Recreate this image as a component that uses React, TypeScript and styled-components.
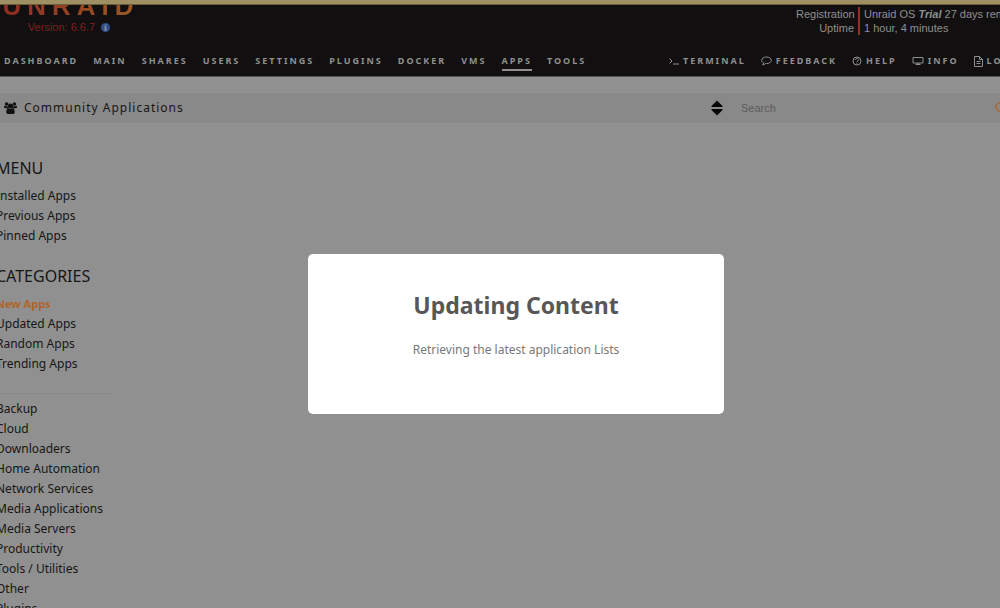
import React from "react";
import styled, { createGlobalStyle } from "styled-components";

const GlobalStyle = createGlobalStyle`
  * { box-sizing: border-box; }
  body {
    margin: 0;
    min-height: 100vh;
    overflow: hidden;
    background: #909090;
    color: #161616;
    font-family: "Noto Sans", "Open Sans", sans-serif;
    font-size: 12px;
    line-height: 20px;
  }
`;

const Page = styled.div`
  height: 100vh;
  overflow: hidden;
`;

const Notice = styled.div`
  height: 5px;
  background: #9f9064;
  border-bottom: 1px solid #6a5f3c;
`;

const Header = styled.header`
  height: 72px;
  display: flex;
  flex-direction: column;
  justify-content: space-between;
  overflow: hidden;
  background: #110f10;
  color: #8f8f8f;
  border-bottom: 1px solid #555;
  white-space: nowrap;
`;

const HeaderTop = styled.div`
  display: flex;
  height: 30px;
  justify-content: space-between;
  align-items: flex-end;
`;

const Brand = styled.div`
  width: 138px;
  display: flex;
  flex-direction: column;
  align-items: center;
`;

const Logo = styled.a`
  font: 700 26px/26px "Liberation Sans", sans-serif;
  letter-spacing: 6px;
  padding-left: 4px;
  color: transparent;
  text-decoration: none;
  background: linear-gradient(90deg, #8e2a22, #9a5a22);
  background-clip: text;
`;

const Version = styled.div`
  display: flex;
  align-items: center;
  gap: 6px;
  height: 16px;
  font: 11px/16px "Liberation Sans", sans-serif;
  color: #80211f;
`;

const ServerInfo = styled.dl`
  width: 204px;
  margin: 0;
  display: grid;
  grid-template-columns: 62px 1fr;
  font: 11px/14px "Liberation Sans", sans-serif;
`;

const InfoLabel = styled.dt`
  text-align: right;
  padding-right: 4px;
`;

const InfoValue = styled.dd`
  margin: 0;
  padding-left: 4px;
  border-left: 2px solid #8f3528;
`;

const Nav = styled.nav`
  display: flex;
  justify-content: space-between;
  height: 25px;
`;

const NavGroup = styled.div<{ $gap: number }>`
  display: flex;
  gap: ${(p) => p.$gap}px;
  padding-left: 4px;
`;

const Utilities = styled(NavGroup)`
  width: 331px;
  padding: 0;
`;

const NavLink = styled.a<{ $active?: boolean }>`
  display: flex;
  align-items: center;
  gap: 4px;
  height: 20px;
  padding-top: 2px;
  color: inherit;
  text-decoration: none;
  font: 700 9px/16px "Noto Sans", sans-serif;
  letter-spacing: 2px;
  border-bottom: 2px solid ${(p) => (p.$active ? "#8f8f8f" : "transparent")};
`;

const TitleBar = styled.div`
  display: flex;
  align-items: center;
  height: 30px;
  margin-top: 16px;
  padding-left: 4px;
  background: #898989;
  overflow: hidden;
`;

const Title = styled.h1`
  flex: 1;
  display: flex;
  align-items: center;
  gap: 7px;
  margin: 0;
  font-size: 12px;
  font-weight: 400;
  letter-spacing: 1px;
`;

const Tools = styled.div`
  display: flex;
  align-items: center;
  width: 289px;
`;

const IconButton = styled.button`
  display: flex;
  padding: 0;
  border: 0;
  background: none;
  color: #050505;
`;

const SearchInput = styled.input`
  flex: 1;
  min-width: 0;
  margin: 0 0 0 18px;
  padding: 0;
  border: 0;
  background: none;
  font: 11px/16px "Liberation Sans", sans-serif;
  &::placeholder { color: #5c5c5c; opacity: 1; }
`;

const SearchButton = styled(IconButton)`
  width: 5px;
  overflow: hidden;
  color: #b0652a;
  svg { flex-shrink: 0; }
`;

const Sidebar = styled.aside`
  width: 114px;
  margin: 35px 0 0 -4px;
`;

const Heading = styled.h2`
  margin: 0 0 8px;
  font-size: 16px;
  line-height: 20px;
  font-weight: 400;
  text-transform: uppercase;
`;

const List = styled.ul`
  margin: 0;
  padding: 0;
  list-style: none;
  & + h2 { margin-top: 20px; }
`;

const Item = styled.li`
  display: flex;
  white-space: nowrap;
`;

const ItemLink = styled.a<{ $selected?: boolean }>`
  color: ${(p) => (p.$selected ? "#b0652a" : "inherit")};
  font-size: ${(p) => (p.$selected ? 11 : 12)}px;
  font-weight: ${(p) => (p.$selected ? 700 : 400)};
  text-decoration: none;
`;

const Divider = styled.hr`
  margin: 19px 0 5px;
  border: 0;
  border-top: 1px solid #888;
`;

const Overlay = styled.div`
  position: fixed;
  inset: 0;
  display: flex;
  align-items: center;
  justify-content: center;
  padding: 60px 0 0 32px;
`;

const Dialog = styled.div`
  width: 416px;
  min-height: 160px;
  padding: 32px 16px;
  border-radius: 5px;
  background: #fff;
  text-align: center;
`;

const DialogTitle = styled.h2`
  margin: 0;
  font: 700 23px/38px "Noto Sans", sans-serif;
  color: #575757;
`;

const DialogText = styled.p`
  margin: 16px 0 0;
  font-size: 12px;
  line-height: 20px;
  color: #797979;
`;

const line = { fill: "none", stroke: "currentColor", strokeWidth: 1 } as const;

const InfoIcon = () => (
  <svg width="9" height="9" viewBox="0 0 9 9" aria-hidden="true">
    <circle cx="4.5" cy="4.5" r="4.5" fill="#314f8d" />
    <path d="M3.8 1.4h1.5v1.3H3.8zM3.2 3.6h2.1v2.9h.6v.9H3.2v-.9h.6v-2h-.6z" fill="#8a94a4" />
  </svg>
);
const TerminalIcon = () => (
  <svg width="10" height="10" viewBox="0 0 10 10" aria-hidden="true" {...line}>
    <path d="M.5 2.5 3 5 .5 7.5M4 8h6" />
  </svg>
);
const FeedbackIcon = () => (
  <svg width="11" height="10" viewBox="0 0 11 10" aria-hidden="true" {...line}>
    <path d="M5.5 1C2.8 1 .7 2.4.7 4.3c0 1.1.8 2 1.9 2.6-.1.8-.5 1.5-1 2 1.3-.1 2.2-.6 2.900-1.400.3.1.7.1 1 .1 2.700 0 4.800-1.400 4.800-3.300S8.200 1 5.500 1Z" />
  </svg>
);
const HelpIcon = () => (
  <svg width="10" height="10" viewBox="0 0 10 10" aria-hidden="true" {...line}>
    <circle cx="5" cy="5" r="4" />
    <path d="M3.5 4c0-2 3-1.9 3-.2C6.5 4.9 5 4.7 5 6M5 6.700v1" />
  </svg>
);
const MonitorIcon = () => (
  <svg width="12" height="10" viewBox="0 0 12 10" aria-hidden="true" {...line}>
    <path d="M1 1.5h10v5.5H1zM5 7v1.500M7 7v1.500M3.500 8.500h5" />
  </svg>
);
const LogIcon = () => (
  <svg width="9" height="11" viewBox="0 0 9 11" aria-hidden="true" {...line}>
    <path d="M.5.5h5l3 3v7h-8zM5.5.5v3h3M2.500 5.500h4M2.500 7.500h4" />
  </svg>
);
const UsersIcon = () => (
  <svg width="13" height="12" viewBox="0 0 13 12" fill="#111" aria-hidden="true">
    <circle cx="2.6" cy="2" r="1.8" />
    <circle cx="10.4" cy="2" r="1.8" />
    <circle cx="6.5" cy="4" r="2.6" />
    <path d="M1 3.8c1 .7 1.8.6 2.6.1 0 1 .3 1.7.8 2.3H1.300C.5 6.200 0 5.800 0 5c0-.6.3-1.500 1-1.200ZM12 3.800c-1 .7-1.800.6-2.600.1 0 1-.3 1.700-.8 2.300h3.100c.8 0 1.300-.4 1.300-1.200 0-.6-.3-1.500-1-1.200ZM4.300 6.200c1.400 1 3 1 4.400 0 1.500 0 2 2 2 3.700 0 1.300-.8 2.100-2 2.100H4.300c-1.200 0-2-.8-2-2.100 0-1.700.5-3.700 2-3.700Z" />
  </svg>
);
const SortIcon = () => (
  <svg width="12" height="16" viewBox="0 0 12 16" fill="currentColor" aria-hidden="true">
    <path d="M6 .5 11.5 6q.5 1-.5 1H1Q0 7 .5 6ZM6 15.5.5 10Q0 9 1 9h10q1 0 .5 1Z" />
  </svg>
);
const SearchIcon = () => (
  <svg width="12" height="12" viewBox="0 0 12 12" aria-hidden="true" fill="none" stroke="currentColor" strokeWidth="1.5">
    <circle cx="5" cy="5" r="4" /><path d="m8 8 3 3" />
  </svg>
);

const tabs = ["DASHBOARD", "MAIN", "SHARES", "USERS", "SETTINGS", "PLUGINS", "DOCKER", "VMS", "APPS", "TOOLS"];
const utilities = [
  { label: "TERMINAL", Icon: TerminalIcon },
  { label: "FEEDBACK", Icon: FeedbackIcon },
  { label: "HELP", Icon: HelpIcon },
  { label: "INFO", Icon: MonitorIcon },
  { label: "LOG", Icon: LogIcon },
];
const menu = ["Installed Apps", "Previous Apps", "Pinned Apps"];
const featured = ["New Apps", "Updated Apps", "Random Apps", "Trending Apps"];
const categories = ["Backup", "Cloud", "Downloaders", "Home Automation", "Network Services", "Media Applications", "Media Servers", "Productivity", "Tools / Utilities", "Other", "Plugins"];

const LinkList = ({ items, selected }: { items: string[]; selected?: string }) => (
  <List>
    {items.map((item) => (
      <Item key={item}>
        <ItemLink href="#" $selected={item === selected}>{item}</ItemLink>
      </Item>
    ))}
  </List>
);

export default function App() {
  return (
    <Page>
      <GlobalStyle />
      <Notice />
      <Header>
        <HeaderTop>
          <Brand>
            <Logo href="#">UNRAID</Logo>
            <Version>Version: 6.6.7 <InfoIcon /></Version>
          </Brand>
          <ServerInfo>
            <InfoLabel>Registration</InfoLabel>
            <InfoValue>Unraid OS <b><i>Trial</i></b> 27 days remaining</InfoValue>
            <InfoLabel>Uptime</InfoLabel>
            <InfoValue>1 hour, 4 minutes</InfoValue>
          </ServerInfo>
        </HeaderTop>
        <Nav>
          <NavGroup $gap={15}>
            {tabs.map((tab) => (
              <NavLink key={tab} href="#" $active={tab === "APPS"}>{tab}</NavLink>
            ))}
          </NavGroup>
          <Utilities $gap={15}>
            {utilities.map(({ label, Icon }) => (
              <NavLink key={label} href="#"><Icon />{label}</NavLink>
            ))}
          </Utilities>
        </Nav>
      </Header>
      <TitleBar>
        <Title><UsersIcon />Community Applications</Title>
        <Tools>
          <IconButton aria-label="Sort"><SortIcon /></IconButton>
          <SearchInput type="text" placeholder="Search" aria-label="Search" />
          <SearchButton aria-label="Run search"><SearchIcon /></SearchButton>
        </Tools>
      </TitleBar>
      <Sidebar>
        <Heading>Menu</Heading>
        <LinkList items={menu} />
        <Heading>Categories</Heading>
        <LinkList items={featured} selected="New Apps" />
        <Divider />
        <LinkList items={categories} />
      </Sidebar>
      <Overlay>
        <Dialog role="dialog" aria-modal="true" aria-labelledby="dialog-title">
          <DialogTitle id="dialog-title">Updating Content</DialogTitle>
          <DialogText>Retrieving the latest application Lists</DialogText>
        </Dialog>
      </Overlay>
    </Page>
  );
}
